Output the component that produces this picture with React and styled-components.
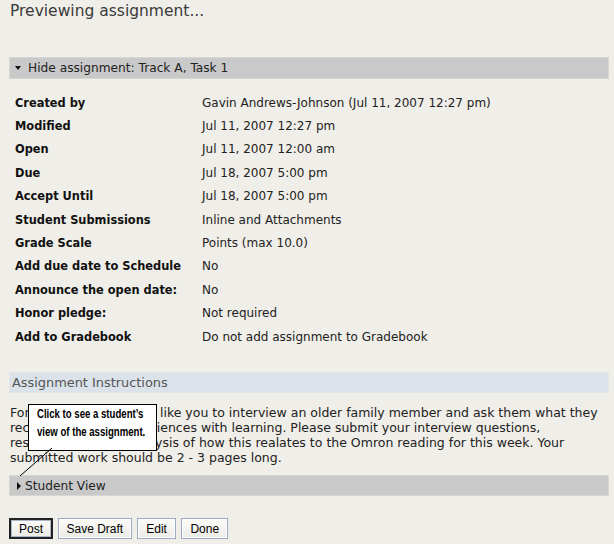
import React from "react";
import styled, { createGlobalStyle } from "styled-components";

const Global = createGlobalStyle`
  html, body { margin: 0; padding: 0; background: #f0eee8; }
  body { font-family: "DejaVu Sans", Verdana, sans-serif; font-size: 11px; color: #222; }
`;

const Page = styled.div`
  width: 600px;
  padding: 0 5px 0 9px;
  position: relative;
`;

const Title = styled.h1`
  margin: 0;
  padding: 0 0 0 1px;
  font-size: 15.5px;
  font-weight: normal;
  line-height: 22px;
  color: #3a3a3a;
`;

const ToggleBar = styled.div`
  margin-top: ${(p) => p.$mt}px;
  height: ${(p) => p.$h}px;
  background: #c9c9c9;
  border: 1px solid #d8d6d0;
  box-sizing: border-box;
  display: flex;
  align-items: center;
  padding-left: ${(p) => p.$pl}px;
  gap: ${(p) => p.$gap}px;
  font-size: 12.2px;
  color: #222;
`;

const TriDown = styled.span`
  width: 0;
  height: 0;
  border-left: 3.5px solid transparent;
  border-right: 3.5px solid transparent;
  border-top: 4px solid #111;
`;

const TriRight = styled.span`
  width: 0;
  height: 0;
  border-top: 4px solid transparent;
  border-bottom: 4px solid transparent;
  border-left: 4px solid #111;
`;

const Details = styled.div`
  margin-top: 12px;
  display: grid;
  grid-template-columns: 187px 1fr;
  grid-auto-rows: 23.4px;
  padding-left: 6px;
  align-items: center;
`;

const Label = styled.div`
  font-weight: bold;
  font-size: 11.4px;
  color: #111;
`;

const Value = styled.div`
  font-size: 12px;
  color: #222;
`;

const SectionBar = styled.div`
  margin-top: 24px;
  height: 21px;
  background: #dbe2e9;
  border: 1px solid #e4e6e6;
  box-sizing: border-box;
  display: flex;
  align-items: center;
  padding-left: 2px;
  font-size: 12.9px;
  color: #555;
`;

const Instructions = styled.p`
  margin: 12px 0 0;
  padding-left: 1px;
  width: 595px;
  font-size: 12.5px;
  line-height: 15px;
  color: #222;
`;

const Callout = styled.div`
  position: absolute;
  left: 28px;
  top: 404px;
  width: 129px;
  height: 47px;
  box-sizing: border-box;
  background: #fff;
  border: 1px solid #000;
  padding: 0 0 0 8px;
  font-family: "Liberation Sans", Arial, sans-serif;
  font-weight: bold;
  font-size: 12px;
  line-height: 18px;
  color: #000;
  white-space: nowrap;
`;

const CalloutLine = styled.span`
  display: block;
  transform: scaleX(0.8);
  transform-origin: left center;
`;

const Pointer = styled.svg`
  position: absolute;
  left: 0;
  top: 0;
  pointer-events: none;
`;

const Buttons = styled.div`
  margin-top: 22px;
  display: flex;
  gap: 5px;
`;

const Button = styled.button`
  height: 21px;
  padding: 0 ${(p) => p.$px}px;
  font-family: "Liberation Sans", Arial, sans-serif;
  font-size: 12px;
  color: #000;
  background: linear-gradient(#fbfbf8, #ecebe6);
  border: ${(p) => (p.$primary ? "2px solid #222" : "1px solid #9aaac2")};
  box-shadow: ${(p) => (p.$primary ? "inset 0 0 0 1px #aab6c8" : "inset 0 0 0 1px #fff")};
  border-radius: 0;
  cursor: pointer;
`;

const rows = [
  ["Created by", "Gavin Andrews-Johnson (Jul 11, 2007 12:27 pm)"],
  ["Modified", "Jul 11, 2007 12:27 pm"],
  ["Open", "Jul 11, 2007 12:00 am"],
  ["Due", "Jul 18, 2007 5:00 pm"],
  ["Accept Until", "Jul 18, 2007 5:00 pm"],
  ["Student Submissions", "Inline and Attachments"],
  ["Grade Scale", "Points (max 10.0)"],
  ["Add due date to Schedule", "No"],
  ["Announce the open date:", "No"],
  ["Honor pledge:", "Not required"],
  ["Add to Gradebook", "Do not add assignment to Gradebook"],
];

export default function App() {
  return (
    <>
      <Global />
      <Page>
        <Title>Previewing assignment...</Title>
        <ToggleBar $mt={35} $h={22} $pl={5} $gap={7}>
          <TriDown />
          <span>Hide assignment: Track A, Task 1</span>
        </ToggleBar>
        <Details>
          {rows.map(([l, v]) => (
            <React.Fragment key={l}>
              <Label>{l}</Label>
              <Value>{v}</Value>
            </React.Fragment>
          ))}
        </Details>
        <SectionBar>Assignment Instructions</SectionBar>
        <Instructions>
          For this assignment, I'd like you to interview an older family member and ask them what they
          recall about their experiences with learning. Please submit your interview questions,
          responses, and an analysis of how this realates to the Omron reading for this week. Your
          submitted work should be 2 - 3 pages long.
        </Instructions>
        <ToggleBar $mt={10} $h={21} $pl={7} $gap={4}>
          <TriRight />
          <span>Student View</span>
        </ToggleBar>
        <Buttons>
          <Button $primary $px={8}>Post</Button>
          <Button $px={7.5}>Save Draft</Button>
          <Button $px={8.5}>Edit</Button>
          <Button $px={8}>Done</Button>
        </Buttons>
        <Callout>
          <CalloutLine>Click to see a student’s</CalloutLine>
          <CalloutLine>view of the assignment.</CalloutLine>
        </Callout>
        <Pointer width="614" height="544">
          <line x1="52" y1="448" x2="20" y2="476" stroke="#000" strokeWidth="1" />
        </Pointer>
      </Page>
    </>
  );
}
